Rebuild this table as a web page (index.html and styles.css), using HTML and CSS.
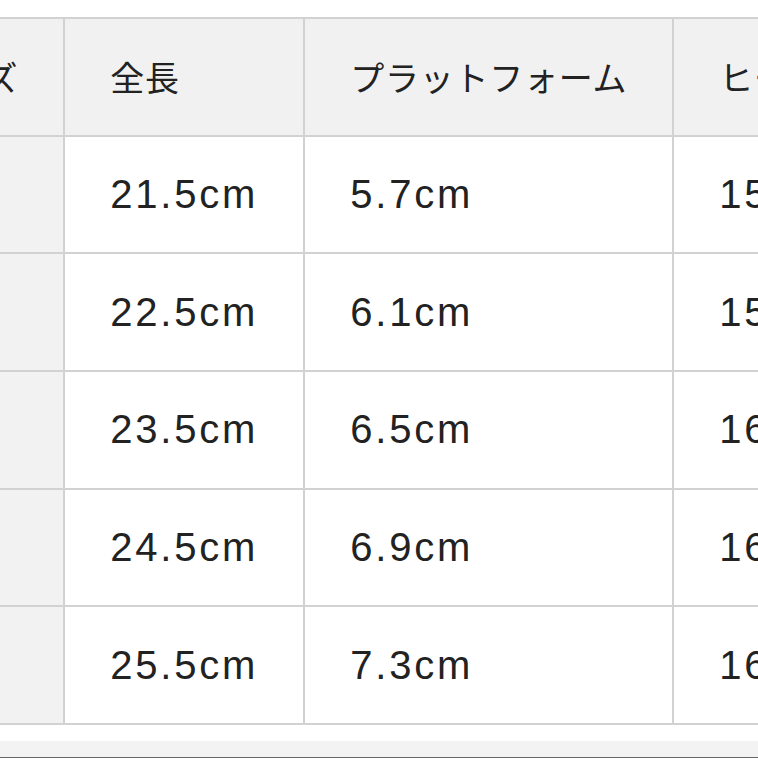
FILE: index.html
```html
<!DOCTYPE html>
<html lang="ja">
<head>
<meta charset="utf-8">
<link rel="stylesheet" href="styles.css">
</head>
<body>
<div class="viewport">
  <table class="size-table">
    <thead>
      <tr>
        <th class="label">サイズ</th>
        <th>全長</th>
        <th>プラットフォーム</th>
        <th>ヒール</th>
      </tr>
    </thead>
    <tbody>
      <tr><td class="label">S</td><td class="num">21.5cm</td><td class="num">5.7cm</td><td class="num">15.0cm</td></tr>
      <tr><td class="label">M</td><td class="num">22.5cm</td><td class="num">6.1cm</td><td class="num">15.5cm</td></tr>
      <tr><td class="label">L</td><td class="num">23.5cm</td><td class="num">6.5cm</td><td class="num">16.0cm</td></tr>
      <tr><td class="label">XL</td><td class="num">24.5cm</td><td class="num">6.9cm</td><td class="num">16.5cm</td></tr>
      <tr><td class="label">XXL</td><td class="num">25.5cm</td><td class="num">7.3cm</td><td class="num">16.5cm</td></tr>
    </tbody>
  </table>
  <div class="footer-band"></div>
</div>
</body>
</html>
```
FILE: styles.css
```css
html, body {
  margin: 0;
  padding: 0;
  background: #ffffff;
  overflow: hidden;
}

.viewport {
  width: 758px;
  height: 758px;
  overflow: hidden;
  padding-top: 17px;
  box-sizing: border-box;
  font-family: "Liberation Sans", "Noto Sans CJK JP", sans-serif;
  color: #222222;
}

.size-table {
  border-collapse: collapse;
  margin-left: -132px;
  white-space: nowrap;
}

.size-table th,
.size-table td {
  border: 2px solid #d2d2d2;
  height: 115.7px;
  padding: 0 45px;
  text-align: left;
  vertical-align: middle;
}

.size-table th {
  background: #f1f1f1;
  font-weight: normal;
  font-size: 34px;
  letter-spacing: 0.75px;
}

.size-table td {
  background: #ffffff;
  font-size: 40px;
  letter-spacing: 2.8px;
}

.size-table td.label {
  background: #f2f2f2;
  color: transparent;
}

.footer-band {
  margin-top: 16px;
  height: 16px;
  background: #f3f3f3;
  border-bottom: 1px solid #666666;
}
```
